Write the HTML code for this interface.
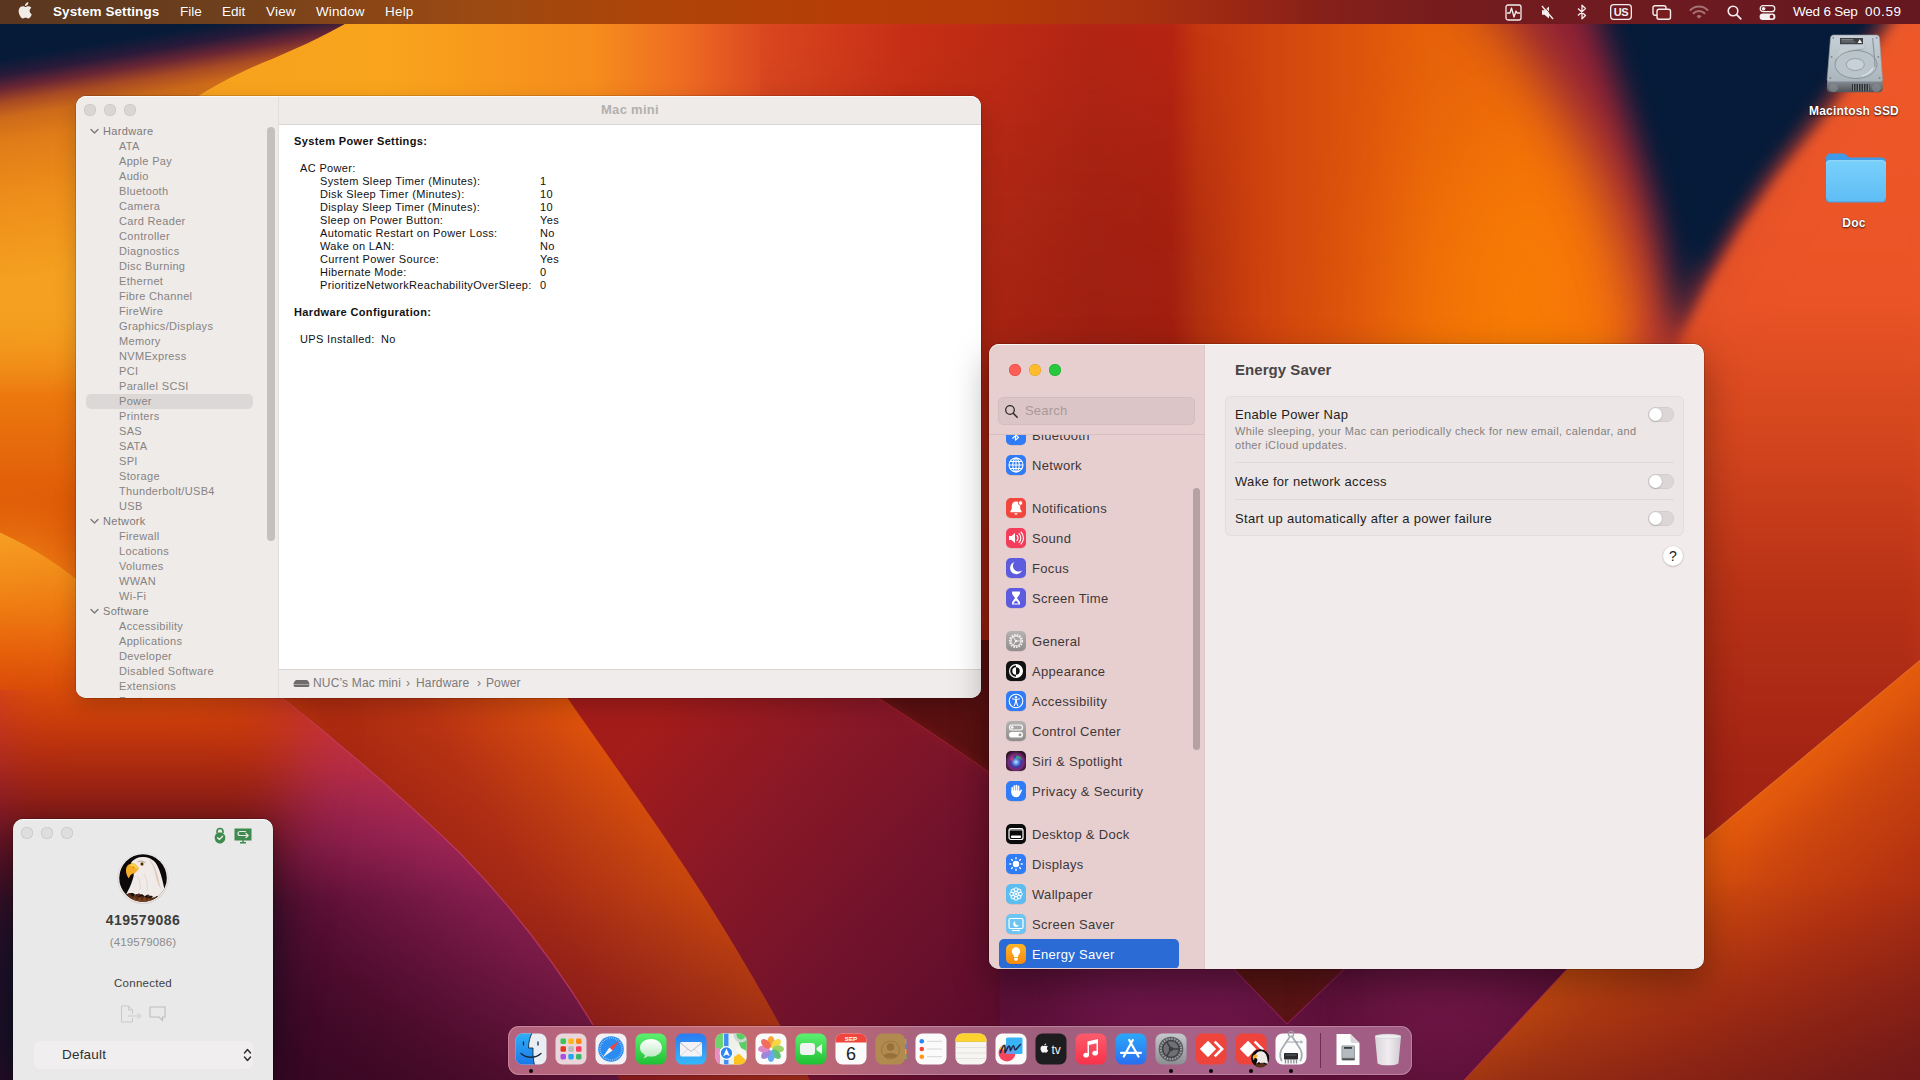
<!DOCTYPE html>
<html lang="en">
<head>
<meta charset="utf-8">
<title>Desktop</title>
<style>
*{box-sizing:border-box;margin:0;padding:0}
html,body{width:1920px;height:1080px;overflow:hidden;background:#b82814}
body{font-family:"Liberation Sans",sans-serif;position:relative;-webkit-font-smoothing:antialiased}
.abs{position:absolute}
#wall{position:absolute;left:0;top:0;width:1920px;height:1080px}
</style>
</head>
<body>
<svg id="wall" width="1920" height="1080" viewBox="0 0 1920 1080">
<defs>
<filter id="b4" filterUnits="userSpaceOnUse" x="-300" y="-300" width="2520" height="1680"><feGaussianBlur stdDeviation="4" color-interpolation-filters="sRGB"/></filter>
<filter id="b8" filterUnits="userSpaceOnUse" x="-300" y="-300" width="2520" height="1680"><feGaussianBlur stdDeviation="8" color-interpolation-filters="sRGB"/></filter>
<filter id="b15" filterUnits="userSpaceOnUse" x="-300" y="-300" width="2520" height="1680"><feGaussianBlur stdDeviation="15" color-interpolation-filters="sRGB"/></filter>
<filter id="b30" filterUnits="userSpaceOnUse" x="-300" y="-300" width="2520" height="1680"><feGaussianBlur stdDeviation="30" color-interpolation-filters="sRGB"/></filter>
<filter id="b60" filterUnits="userSpaceOnUse" x="-300" y="-300" width="2520" height="1680"><feGaussianBlur stdDeviation="60" color-interpolation-filters="sRGB"/></filter>
<filter id="b6" filterUnits="userSpaceOnUse" x="-300" y="-300" width="2520" height="1680"><feGaussianBlur stdDeviation="6" color-interpolation-filters="sRGB"/></filter>
<linearGradient id="gTL" x1="0" y1="24" x2="50" y2="320" gradientUnits="userSpaceOnUse">
<stop offset="0" stop-color="#051b39"/>
<stop offset="0.12" stop-color="#071b38"/>
<stop offset="0.17" stop-color="#2a1a3a"/>
<stop offset="0.215" stop-color="#6a2634"/>
<stop offset="0.26" stop-color="#a84a24"/>
<stop offset="0.31" stop-color="#cc6a1a"/>
<stop offset="0.39" stop-color="#e07c18"/>
<stop offset="0.58" stop-color="#ee8e1a"/>
<stop offset="0.85" stop-color="#f5a020"/>
</linearGradient>
<linearGradient id="gLS" x1="0" y1="300" x2="0" y2="620" gradientUnits="userSpaceOnUse">
<stop offset="0" stop-color="#f5a020" stop-opacity="0"/>
<stop offset="0.3" stop-color="#ec780e"/>
<stop offset="0.62" stop-color="#e05c08"/>
<stop offset="1" stop-color="#dc5606"/>
</linearGradient>
<linearGradient id="gtop" x1="0" y1="0" x2="1920" y2="0" gradientUnits="userSpaceOnUse">
<stop offset="0" stop-color="#f5a020"/>
<stop offset="0.20" stop-color="#f9a41c"/>
<stop offset="0.31" stop-color="#f68c1c"/>
<stop offset="0.355" stop-color="#ee6c22"/>
<stop offset="0.40" stop-color="#da4620"/>
<stop offset="0.47" stop-color="#c83016"/>
<stop offset="0.57" stop-color="#b22514"/>
<stop offset="0.610" stop-color="#b62412"/>
<stop offset="0.624" stop-color="#c43610"/>
<stop offset="0.66" stop-color="#d0440e"/>
<stop offset="0.705" stop-color="#dc540c"/>
<stop offset="0.745" stop-color="#e6620a"/>
<stop offset="0.79" stop-color="#ea660a"/>
<stop offset="0.86" stop-color="#ec5a20"/>
<stop offset="1" stop-color="#f05a28"/>
</linearGradient>
<linearGradient id="gdark" x1="0" y1="0" x2="0" y2="1080" gradientUnits="userSpaceOnUse">
<stop offset="0.05" stop-color="#000" stop-opacity="0"/>
<stop offset="0.35" stop-color="#500808" stop-opacity="0.22"/>
<stop offset="0.65" stop-color="#500808" stop-opacity="0.30"/>
</linearGradient>
<linearGradient id="gleft" x1="0" y1="0" x2="0" y2="1080" gradientUnits="userSpaceOnUse">
<stop offset="0.49" stop-color="#f8a428"/>
<stop offset="0.54" stop-color="#f28c18"/>
<stop offset="0.60" stop-color="#e8620a"/>
<stop offset="0.645" stop-color="#d84808"/>
<stop offset="0.665" stop-color="#cc3c0a"/>
<stop offset="0.71" stop-color="#ae2a10"/>
<stop offset="0.745" stop-color="#8a1a14"/>
<stop offset="0.80" stop-color="#4a1020"/>
<stop offset="0.86" stop-color="#101428"/>
<stop offset="1" stop-color="#081428"/>
</linearGradient>
<linearGradient id="gA" x1="520" y1="760" x2="250" y2="1000" gradientUnits="userSpaceOnUse">
<stop offset="0" stop-color="#b42a5c"/>
<stop offset="0.35" stop-color="#8c1f52"/>
<stop offset="0.75" stop-color="#5a0e34"/>
<stop offset="1" stop-color="#40082a"/>
</linearGradient>
<linearGradient id="gAtop" x1="0" y1="690" x2="0" y2="900" gradientUnits="userSpaceOnUse">
<stop offset="0" stop-color="#cc3230" stop-opacity="1"/>
<stop offset="0.35" stop-color="#c23040" stop-opacity="0.8"/>
<stop offset="0.7" stop-color="#b02a50" stop-opacity="0.35"/>
<stop offset="1" stop-color="#b02858" stop-opacity="0"/>
</linearGradient>
<linearGradient id="gAv" x1="0" y1="840" x2="0" y2="1080" gradientUnits="userSpaceOnUse">
<stop offset="0" stop-color="#30061c" stop-opacity="0"/>
<stop offset="1" stop-color="#30061c" stop-opacity="0.5"/>
</linearGradient>
<linearGradient id="gB" x1="690" y1="830" x2="470" y2="960" gradientUnits="userSpaceOnUse">
<stop offset="0" stop-color="#ec5c06"/>
<stop offset="0.3" stop-color="#d44a0e"/>
<stop offset="0.65" stop-color="#bc3412"/>
<stop offset="1" stop-color="#ac2a10"/>
</linearGradient>
<linearGradient id="gBv" x1="0" y1="700" x2="0" y2="1080" gradientUnits="userSpaceOnUse">
<stop offset="0" stop-color="#5a0820" stop-opacity="0"/>
<stop offset="0.5" stop-color="#5a0820" stop-opacity="0.22"/>
<stop offset="1" stop-color="#5a0820" stop-opacity="0.6"/>
</linearGradient>
<linearGradient id="gC" x1="650" y1="720" x2="1000" y2="1040" gradientUnits="userSpaceOnUse">
<stop offset="0" stop-color="#a41c1a"/>
<stop offset="0.3" stop-color="#8a1826"/>
<stop offset="0.65" stop-color="#70122c"/>
<stop offset="1" stop-color="#5a0c2c"/>
</linearGradient>
<linearGradient id="gR" x1="0" y1="0" x2="0" y2="1080" gradientUnits="userSpaceOnUse">
<stop offset="0" stop-color="#f05a2a"/>
<stop offset="0.28" stop-color="#ea5426"/>
<stop offset="0.40" stop-color="#d4461e"/>
<stop offset="0.55" stop-color="#b83216"/>
<stop offset="0.70" stop-color="#a42414"/>
<stop offset="1" stop-color="#8c1c18"/>
</linearGradient>
<linearGradient id="gR2" x1="1812" y1="750" x2="2017" y2="996" gradientUnits="userSpaceOnUse">
<stop offset="0" stop-color="#e65c0c"/>
<stop offset="0.06" stop-color="#e0560c"/>
<stop offset="0.2" stop-color="#cc460e"/>
<stop offset="0.45" stop-color="#b83410"/>
<stop offset="0.95" stop-color="#8c2016"/>
</linearGradient>
<linearGradient id="gR2v" x1="0" y1="880" x2="0" y2="1080" gradientUnits="userSpaceOnUse">
<stop offset="0" stop-color="#50101a" stop-opacity="0"/>
<stop offset="1" stop-color="#50101a" stop-opacity="0.42"/>
</linearGradient>
</defs>
<!-- base -->
<rect width="1920" height="1080" fill="url(#gtop)"/>
<rect width="560" height="1080" x="660" fill="url(#gdark)" filter="url(#b30)"/>
<!-- orange bulge glow -->
<ellipse cx="1530" cy="350" rx="110" ry="240" fill="#f97e04" opacity="0.9" filter="url(#b60)"/>
<!-- right orange-red region -->
<path d="M1640,330 L1905,-30 L1940,-30 L1940,1100 L1560,1100 Z" fill="url(#gR)" filter="url(#b15)"/>
<!-- navy petal top-right -->
<path d="M1460,-40 L1915,-40 L1780,160 L1705,300 L1668,420 C1660,330 1640,250 1600,165 C1565,95 1505,20 1460,-40 Z" fill="#861c38" filter="url(#b30)" opacity="0.95"/>
<path d="M1575,-40 L1927,-40 L1821,112 L1771,172 L1736,222 L1700,282 L1676,345 C1674,300 1666,245 1648,180 C1630,120 1605,40 1575,-40 Z" fill="#051b39" filter="url(#b15)"/>
<path d="M1615,-40 L1912,-40 L1812,100 L1762,165 L1728,215 L1698,270 C1690,235 1680,200 1668,160 C1650,100 1635,30 1615,-40 Z" fill="#051b39" filter="url(#b8)"/>
<path d="M1934,-30 L1950,-30 L1950,420 L1660,420 L1683,334 L1707,288 L1743,228 L1778,178 L1828,118 Z" fill="url(#gR)" filter="url(#b6)" opacity="0.9"/>
<!-- top-left navy gradient -->
<rect x="-10" y="-10" width="520" height="330" fill="url(#gTL)"/>
<!-- yellow petal top -->
<path d="M352,20 C322,37 292,51 262,63 C236,74 214,86 192,100 C150,128 120,160 90,200 L60,330 L760,330 L760,20 Z" fill="url(#gtop)"/>
<rect x="-10" y="300" width="320" height="330" fill="url(#gLS)"/>
<!-- left petal -->
<path d="M-10,528 C30,545 60,565 90,590 L300,700 L300,1090 L-10,1090 Z" fill="url(#gleft)"/>
<!-- bottom base -->
<path d="M260,690 L1010,690 L1010,960 L1700,960 L1700,1090 L260,1090 Z" fill="#64102e"/>
<!-- petal C -->
<path d="M540,690 L1010,690 L1010,1090 L780,1090 Z" fill="url(#gC)"/>
<path d="M866,640 L866,690 C910,718 955,748 1000,780 L1010,780 L1010,640 Z" fill="#5a1010"/>
<path d="M866,690 C910,718 955,748 1000,780" fill="none" stroke="#a8222e" stroke-width="2.5" opacity=".55" filter="url(#b4)"/>
<path d="M866,690 C910,718 955,748 1000,780" fill="none" stroke="#b02a30" stroke-width="1" opacity=".6"/>
<!-- petal B -->
<path d="M270,690 L562,690 C600,745 640,800 688,872 C730,936 770,1005 815,1090 L560,1090 Z" fill="url(#gB)"/>
<path d="M270,690 L562,690 C600,745 640,800 688,872 C730,936 770,1005 815,1090 L560,1090 Z" fill="url(#gBv)"/>
<!-- petal A -->
<path d="M-10,690 L272,690 C330,735 400,795 460,853 C515,910 560,970 593,1025 L625,1090 L-10,1090 Z" fill="url(#gA)"/>
<path d="M-10,690 L272,690 C330,735 400,795 460,853 C515,910 560,970 593,1025 L625,1090 L-10,1090 Z" fill="url(#gAtop)"/>
<path d="M-10,690 L272,690 C330,735 400,795 460,853 C515,910 560,970 593,1025 L625,1090 L-10,1090 Z" fill="url(#gAv)"/>
<path d="M272,690 C330,735 400,795 460,853 C515,910 560,970 593,1025" fill="none" stroke="#d04878" stroke-width="1.2" opacity="0.6"/>
<!-- left strip over petal A -->
<path d="M-10,528 C30,545 60,565 90,590 L300,700 L240,1090 L-10,1090 Z" fill="url(#gleft)" filter="url(#b30)"/>
<!-- bottom right -->
<path d="M1000,960 L1700,960 L1700,1090 L1000,1090 Z" fill="#5c1038"/>
<ellipse cx="1180" cy="1000" rx="120" ry="60" fill="#6c1648" filter="url(#b30)"/>
<path d="M1225,960 L1354,960 L1287,1024 Z" fill="#5a1414"/>
<path d="M1225,960 L1287,1024 L1354,960" fill="none" stroke="#9a2460" stroke-width="1.2" opacity="0.7"/>
<ellipse cx="1440" cy="1000" rx="90" ry="60" fill="#6c1644" filter="url(#b30)"/>
<!-- right lower petal -->
<path d="M1930,652 L1704,840 L1568,968 L1455,1090 L1930,1090 Z" fill="url(#gR2)"/>
<path d="M1930,652 L1704,840 L1568,968 L1455,1090 L1930,1090 Z" fill="url(#gR2v)"/>
<path d="M1930,652 L1704,840" fill="none" stroke="#f28a40" stroke-width="1.2" opacity=".45"/>
<path d="M1568,968 L1455,1090" fill="none" stroke="#c03058" stroke-width="1.2" opacity=".5"/>
</svg>
<style>
#mb{position:absolute;left:0;top:0;width:1920px;height:24px;background:linear-gradient(90deg,#59351f 0,#5e3a20 4%,#70401c 12%,#8a4616 19%,#9c4a12 25%,#ae4408 34%,#b63e06 44%,#b43a08 52%,#a83010 60%,#982614 65%,#86201a 69%,#741c1e 76%,#6c1a20 88%,#64181f 100%);color:#fff;font-size:13.5px;line-height:24px;white-space:nowrap}
#mb span{position:absolute;top:0;text-shadow:0 0 1px rgba(0,0,0,.25)}
#mb svg{position:absolute}
</style>
<div id="mb">
<svg style="left:14px;top:-1px" width="23" height="23" viewBox="0 0 18 18"><path fill="#f2ece8" d="M12.2 9.4c0-1.6 1.3-2.4 1.4-2.5-.8-1.100-1.900-1.300-2.300-1.300-1-.1-1.900.6-2.400.6s-1.300-.6-2.100-.5c-1.100 0-2.100.6-2.600 1.600-1.100 1.900-.3 4.800.8 6.300.5.800 1.200 1.600 2 1.600.8 0 1.100-.5 2.100-.5s1.200.5 2.100.5c.9 0 1.400-.8 1.900-1.500.6-.9.800-1.700.9-1.700 0 0-1.700-.7-1.800-2.600zM10.600 4.500c.4-.5.700-1.300.600-2-.6 0-1.400.4-1.900 1-.4.500-.8 1.200-.7 1.900.8.100 1.500-.4 2-.9z"/></svg>
<span style="left:53px;font-weight:bold;letter-spacing:.09px">System Settings</span>
<span style="left:180px">File</span>
<span style="left:222px">Edit</span>
<span style="left:266px;letter-spacing:.2px">View</span>
<span style="left:316px;letter-spacing:.1px">Window</span>
<span style="left:385px;letter-spacing:.2px">Help</span>
<!-- right icons -->
<svg style="left:1505px;top:4px" width="17" height="17" viewBox="0 0 17 17"><rect x="1" y="1" width="15" height="15" rx="2" fill="none" stroke="#f4eeee" stroke-width="1.3"/><path d="M2 9h3l1.500-5 2.500 9 2-6 1 2h3" fill="none" stroke="#f4eeee" stroke-width="1.3" stroke-linejoin="round"/></svg>
<svg style="left:1539px;top:4px" width="18" height="17" viewBox="0 0 18 17"><path d="M3 6.300h2.500L10 2.500v12L5.500 10.700H3z" fill="#f4eeee"/><path d="M3 2l11 13" stroke="#f4eeee" stroke-width="1.400"/><path d="M4.200 1.200l11 13" stroke="#7a2218" stroke-width="1"/></svg>
<svg style="left:1575px;top:3px" width="14" height="18" viewBox="0 0 14 18"><path d="M3 5.500l7.500 7L7 15.800V2.200l3.500 3.300L3 12.500" fill="none" stroke="#f4eeee" stroke-width="1.300" stroke-linejoin="round"/></svg>
<svg style="left:1610px;top:4px" width="22" height="16" viewBox="0 0 22 16"><rect x=".65" y=".65" width="20.700" height="14.700" rx="3" fill="none" stroke="#f4eeee" stroke-width="1.300"/><text x="11" y="12" text-anchor="middle" font-family="Liberation Sans,sans-serif" font-weight="bold" font-size="11" letter-spacing="-.3" fill="#f4eeee">US</text></svg>
<svg style="left:1652px;top:4px" width="20" height="17" viewBox="0 0 20 17"><rect x="1" y="1.700" width="13" height="9.600" rx="2" fill="none" stroke="#f4eeee" stroke-width="1.400"/><rect x="5" y="5.300" width="13.500" height="10" rx="2" fill="#7a1c1e" stroke="#f4eeee" stroke-width="1.400"/></svg>
<svg style="left:1689px;top:4px" width="20" height="16" viewBox="0 0 20 16" opacity=".42"><path d="M1.500 6a12 12 0 0 1 17 0" fill="none" stroke="#f4eeee" stroke-width="2" stroke-linecap="round"/><path d="M4.500 9.200a7.800 7.800 0 0 1 11 0" fill="none" stroke="#f4eeee" stroke-width="2" stroke-linecap="round"/><path d="M7.500 12.200a3.600 3.600 0 0 1 5 0L10 14.800z" fill="#f4eeee"/></svg>
<svg style="left:1726px;top:4px" width="17" height="17" viewBox="0 0 17 17"><circle cx="7" cy="7" r="4.800" fill="none" stroke="#f4eeee" stroke-width="1.600"/><path d="M10.600 10.600l4.200 4.200" stroke="#f4eeee" stroke-width="1.800" stroke-linecap="round"/></svg>
<svg style="left:1759px;top:4px" width="17" height="17" viewBox="0 0 17 17"><rect x="1.200" y="1.700" width="14.600" height="6" rx="3" fill="none" stroke="#f4eeee" stroke-width="1.300"/><circle cx="4.600" cy="4.700" r="1.800" fill="#f4eeee"/><rect x=".6" y="9.500" width="15.800" height="6.400" rx="3.200" fill="#f4eeee"/><circle cx="12.600" cy="12.700" r="1.900" fill="#6e1a20"/></svg>
<span style="left:1793px;letter-spacing:-.22px">Wed 6 Sep</span>
<span style="left:1865px;letter-spacing:.55px">00.59</span>
</div>
<style>
.dlab{position:absolute;width:140px;text-align:center;color:#fff;font-weight:bold;font-size:12px;text-shadow:0 1px 2px rgba(0,0,0,.7),0 0 1px rgba(0,0,0,.5);letter-spacing:.2px;white-space:nowrap}
</style>
<svg style="position:absolute;left:1824px;top:32px" width="62" height="62" viewBox="0 0 62 62">
<defs><linearGradient id="hd1" x1="0" y1="0" x2="0" y2="1"><stop offset="0" stop-color="#c6d0d6"/><stop offset="1" stop-color="#aab5bd"/></linearGradient>
<linearGradient id="hd2" x1="0" y1="0" x2="0" y2="1"><stop offset="0" stop-color="#8e959b"/><stop offset="1" stop-color="#50555a"/></linearGradient></defs>
<path d="M3.200 47.500h55.300l.3 9c0 2.200-1.500 3.700-3.700 3.700H6.600c-2.200 0-3.700-1.500-3.700-3.700z" fill="url(#hd2)"/>
<rect x="28" y="52" width="17.500" height="7" fill="#2a2c2f"/>
<path d="M29.500 52v7M32 52v7M34.500 52v7M37 52v7M39.500 52v7M42 52v7M44.500 52v7" stroke="#7e848a" stroke-width="1.100"/>
<ellipse cx="9.500" cy="56" rx="4.500" ry="4" fill="#868c92" opacity=".7"/><ellipse cx="52.500" cy="56" rx="4.500" ry="4" fill="#868c92" opacity=".7"/>
<path d="M6.500 6c.2-1.800 1.500-3 3.300-3h42.500c1.800 0 3 1.200 3.200 3l3 41c.1 1.600-.9 2.600-2.500 2.600H5.700c-1.600 0-2.600-1-2.500-2.600z" fill="url(#hd1)" stroke="#949ca3" stroke-width=".6"/>
<rect x="16" y="6" width="23" height="6.200" fill="#3c3f43"/><rect x="17.300" y="7.300" width="12" height="1.100" fill="#9a9ea2"/><rect x="17.300" y="9.500" width="14" height="1" fill="#7c8084"/><path d="M33.500 11l2.300-3.700 2.300 3.700z" fill="#f0f0f0"/>
<ellipse cx="32" cy="32.500" rx="21" ry="14" fill="#b9c4cb" stroke="#858d94" stroke-width=".9"/>
<path d="M11.500 29c3-7 11-10.500 22-11.500l6-.8c.8-.1 1.200-.6 1.200-1.400V13.500" fill="none" stroke="#858d94" stroke-width="1"/>
<path d="M11 30c3-7.500 11-11.500 22.500-12.500l7.500-1v-3.300H16.200v3.500z" fill="#c3cdd3" opacity=".9"/>
<ellipse cx="31.300" cy="32.500" rx="9" ry="6" fill="#c8d1d7" stroke="#8c949b" stroke-width=".8"/>
<path d="M48.700 6c.5 9 2.200 20 2.300 29" fill="none" stroke="#8a9299" stroke-width="1.100"/>
<path d="M38 44c5-1.500 9-4.500 11-8" fill="none" stroke="#e8eef2" stroke-width="1.200" opacity=".8"/>
<circle cx="9.300" cy="5.800" r=".9" fill="#7e868d"/><circle cx="52.700" cy="5.800" r=".9" fill="#7e868d"/><circle cx="6.300" cy="46" r=".9" fill="#7e868d"/><circle cx="55.700" cy="46" r=".9" fill="#7e868d"/><circle cx="54.300" cy="25" r=".9" fill="#7e868d"/><circle cx="7.600" cy="25" r=".9" fill="#7e868d"/>
</svg>
<div class="dlab" style="left:1784px;top:104px">Macintosh SSD</div>
<svg style="position:absolute;left:1824px;top:150px" width="64" height="56" viewBox="0 0 64 56">
<defs><linearGradient id="fd1" x1="0" y1="0" x2="0" y2="1"><stop offset="0" stop-color="#79d0fb"/><stop offset="1" stop-color="#5fbdf5"/></linearGradient></defs>
<path d="M2 8c0-2.500 1.500-4.500 4.500-4.500h12c2 0 3 .8 4.500 2.200 1.300 1.300 2.300 1.800 4.500 1.800h30c2.500 0 4.500 1.500 4.500 4.500v10H2z" fill="#3f9be8"/>
<path d="M2 14c0-2.200 1.300-3.500 3.500-3.500h53c2.200 0 3.500 1.300 3.500 3.500v34c0 2.500-1.500 4-4 4H6c-2.500 0-4-1.500-4-4z" fill="url(#fd1)"/>
<path d="M2.500 48.500c0 2 1.500 3.500 3.500 3.500h52c2 0 3.500-1.500 3.500-3.500" fill="none" stroke="#4a9fe0" stroke-width="1.200"/>
<path d="M2.500 13.500c0-1.800 1.200-2.800 3-2.800h53c1.800 0 3 1 3 2.800" fill="none" stroke="#a8e2ff" stroke-width=".8"/>
</svg>
<div class="dlab" style="left:1784px;top:216px">Doc</div>
<style>
#si{position:absolute;left:76px;top:96px;width:905px;height:602px;border-radius:10px;overflow:hidden;background:#fff;box-shadow:0 0 0 .5px rgba(0,0,0,.28),0 8px 22px rgba(0,0,0,.2);font-size:11px;white-space:nowrap}
#si .sb{position:absolute;left:0;top:0;width:203px;height:602px;background:#efebe9;border-right:1px solid #e2dedc}
#si .tb{position:absolute;left:203px;top:0;width:702px;height:29px;background:#efebe9;border-bottom:1px solid #d9d5d3}
#si .tb b{position:absolute;left:0;width:100%;top:6px;text-align:center;font-size:13px;color:#b3b0ae;letter-spacing:.3px}
#si .tl{position:absolute;top:8px;width:12px;height:12px;border-radius:50%;background:#dad6d5;box-shadow:inset 0 0 0 .5px #c4c0be}
#si .sb p{position:absolute;left:43px;color:#868382;height:15px;line-height:15px;letter-spacing:.33px}
#si .sb p.g{left:27px;color:#7c7978}
#si .sb svg{position:absolute;left:14px}
#si .sel{position:absolute;left:10px;top:298px;width:167px;height:15px;border-radius:5px;background:#dcd8d7}
#si .scr{position:absolute;left:191px;top:31px;width:8px;height:414px;border-radius:4px;background:#c3c0bf}
#si .ct div{position:absolute;color:#111;line-height:13px;height:13px;letter-spacing:.35px}
#si .ct b{letter-spacing:.36px}
#si .ft{position:absolute;left:203px;top:573px;width:702px;height:29px;background:#f0eceb;border-top:1px solid #dad6d4;color:#7c7978;font-size:12px;line-height:26px}
#si .ft span{position:absolute;top:0}
#si:after{content:"";position:absolute;left:0;top:0;right:0;bottom:0;border-radius:10px;box-shadow:inset 0 1px 0 rgba(255,255,255,.85);pointer-events:none}
</style>
<div id="si">
<div class="sb">
<i class="tl" style="left:8px"></i><i class="tl" style="left:28px"></i><i class="tl" style="left:48px"></i>
<i class="sel"></i>
<svg style="top:32px" width="9" height="7" viewBox="0 0 9 7"><path d="M1 1.500l3.500 3.500L8 1.500" fill="none" stroke="#7c7978" stroke-width="1.400" stroke-linecap="round" stroke-linejoin="round"/></svg>
<p class="g" style="top:28px">Hardware</p>
<p style="top:43px">ATA</p>
<p style="top:58px">Apple Pay</p>
<p style="top:73px">Audio</p>
<p style="top:88px">Bluetooth</p>
<p style="top:103px">Camera</p>
<p style="top:118px">Card Reader</p>
<p style="top:133px">Controller</p>
<p style="top:148px">Diagnostics</p>
<p style="top:163px">Disc Burning</p>
<p style="top:178px">Ethernet</p>
<p style="top:193px">Fibre Channel</p>
<p style="top:208px">FireWire</p>
<p style="top:223px">Graphics/Displays</p>
<p style="top:238px">Memory</p>
<p style="top:253px">NVMExpress</p>
<p style="top:268px">PCI</p>
<p style="top:283px">Parallel SCSI</p>
<p style="top:298px">Power</p>
<p style="top:313px">Printers</p>
<p style="top:328px">SAS</p>
<p style="top:343px">SATA</p>
<p style="top:358px">SPI</p>
<p style="top:373px">Storage</p>
<p style="top:388px">Thunderbolt/USB4</p>
<p style="top:403px">USB</p>
<svg style="top:422px" width="9" height="7" viewBox="0 0 9 7"><path d="M1 1.500l3.500 3.500L8 1.500" fill="none" stroke="#7c7978" stroke-width="1.400" stroke-linecap="round" stroke-linejoin="round"/></svg>
<p class="g" style="top:418px">Network</p>
<p style="top:433px">Firewall</p>
<p style="top:448px">Locations</p>
<p style="top:463px">Volumes</p>
<p style="top:478px">WWAN</p>
<p style="top:493px">Wi-Fi</p>
<svg style="top:512px" width="9" height="7" viewBox="0 0 9 7"><path d="M1 1.500l3.500 3.500L8 1.500" fill="none" stroke="#7c7978" stroke-width="1.400" stroke-linecap="round" stroke-linejoin="round"/></svg>
<p class="g" style="top:508px">Software</p>
<p style="top:523px">Accessibility</p>
<p style="top:538px">Applications</p>
<p style="top:553px">Developer</p>
<p style="top:568px">Disabled Software</p>
<p style="top:583px">Extensions</p>
<p style="top:598px">Fonts</p>
<i class="scr"></i>
</div>
<div class="tb"><b>Mac mini</b></div>
<div class="ct">
<div style="left:218px;top:39px"><b>System Power Settings:</b></div>
<div style="left:224px;top:66px">AC Power:</div>
<div style="left:244px;top:79px">System Sleep Timer (Minutes):</div><div style="left:464px;top:79px">1</div>
<div style="left:244px;top:92px">Disk Sleep Timer (Minutes):</div><div style="left:464px;top:92px">10</div>
<div style="left:244px;top:105px">Display Sleep Timer (Minutes):</div><div style="left:464px;top:105px">10</div>
<div style="left:244px;top:118px">Sleep on Power Button:</div><div style="left:464px;top:118px">Yes</div>
<div style="left:244px;top:131px">Automatic Restart on Power Loss:</div><div style="left:464px;top:131px">No</div>
<div style="left:244px;top:144px">Wake on LAN:</div><div style="left:464px;top:144px">No</div>
<div style="left:244px;top:157px">Current Power Source:</div><div style="left:464px;top:157px">Yes</div>
<div style="left:244px;top:170px">Hibernate Mode:</div><div style="left:464px;top:170px">0</div>
<div style="left:244px;top:183px">PrioritizeNetworkReachabilityOverSleep:</div><div style="left:464px;top:183px">0</div>
<div style="left:218px;top:210px"><b>Hardware Configuration:</b></div>
<div style="left:224px;top:237px">UPS Installed:</div><div style="left:305px;top:237px">No</div>
</div>
<div class="ft">
<svg style="position:absolute;left:14px;top:9px" width="17" height="9" viewBox="0 0 17 9"><path d="M3.500 1h10c1.200 0 2.500 2 2.800 3.500v2.300c0 .7-.5 1.200-1.200 1.200H1.900C1.200 8 .7 7.500.7 6.800V4.500C1 3 2.300 1 3.500 1z" fill="#6e6b6a"/><rect x=".7" y="5" width="15.600" height=".8" fill="#b5b2b0"/></svg>
<span style="left:34px;letter-spacing:.16px">NUC’s Mac mini</span>
<span style="left:127px">›</span>
<span style="left:137px;letter-spacing:.16px">Hardware</span>
<span style="left:198px">›</span>
<span style="left:207px;letter-spacing:.12px">Power</span>
</div>
</div>
<style>
#ss{position:absolute;left:989px;top:344px;width:715px;height:625px;border-radius:10px;overflow:hidden;background:#f1eceb;box-shadow:0 0 0 .5px rgba(0,0,0,.3),0 14px 36px rgba(0,0,0,.35);white-space:nowrap}
#ss .sb{position:absolute;left:0;top:0;width:216px;height:625px;background:#e7cfd0;border-right:1px solid #dcc6c6}
#ss .tl{position:absolute;top:20px;width:12px;height:12px;border-radius:50%}
#ss .srch{position:absolute;left:9px;top:53px;width:197px;height:28px;border-radius:6px;background:#dcc5c6;box-shadow:inset 0 0 0 .5px rgba(0,0,0,.08)}
#ss .srch span{position:absolute;left:27px;top:6px;font-size:13px;color:#a89a9b;letter-spacing:.2px}
#ss .ln{position:absolute;left:0;top:90px;width:216px;height:1px;background:#d6bfc0}
#ss .list{position:absolute;left:0;top:91px;width:216px;height:533px;overflow:hidden}
#ss .it{position:absolute;left:17px;height:20px;font-size:13px;line-height:20px;color:#3d3738;letter-spacing:.32px}
#ss .it i{position:absolute;left:0;top:0;width:20px;height:20px;border-radius:5px;box-shadow:0 .5px .5px rgba(0,0,0,.15)}
#ss .it i svg{position:absolute;left:0;top:0}
#ss .it span{position:absolute;left:26px;top:1px}
#ss .selbg{position:absolute;left:10px;top:504px;width:180px;height:30px;border-radius:5px;background:#2b6bd6}
#ss .scr{position:absolute;left:204px;top:144px;width:7px;height:262px;border-radius:4px;background:#b6a2a3}
#ss h1{position:absolute;left:246px;top:17px;font-size:15px;font-weight:bold;color:#4a4545;letter-spacing:.05px}
#ss .box{position:absolute;left:236px;top:52px;width:459px;height:140px;border-radius:6px;background:#ece7e6;box-shadow:inset 0 0 0 1px #e3dddc}
#ss .box p{position:absolute;left:10px;font-size:13px;color:#1f1d1d;letter-spacing:.31px}
#ss .box small{position:absolute;left:10px;font-size:11px;color:#858080;letter-spacing:.36px;line-height:14px}
#ss .box hr{position:absolute;left:10px;width:439px;height:1px;border:0;background:#e0dad9}
#ss .tg{position:absolute;left:423px;width:26px;height:15px;border-radius:8px;background:#dcd7d6;box-shadow:inset 0 0 0 .5px rgba(0,0,0,.08)}
#ss .tg:after{content:"";position:absolute;left:1px;top:1px;width:13px;height:13px;border-radius:50%;background:#fff;box-shadow:0 .5px 1.5px rgba(0,0,0,.3)}
#ss .help{position:absolute;left:674px;top:202px;width:20px;height:20px;border-radius:50%;background:#fff;box-shadow:0 .5px 2px rgba(0,0,0,.3);text-align:center;font-size:14px;line-height:20px;color:#222}
#ss:after{content:"";position:absolute;left:0;top:0;right:0;bottom:0;border-radius:10px;box-shadow:inset 0 1px 0 rgba(255,255,255,.8);pointer-events:none}
</style>
<div id="ss">
<div class="sb">
<i class="tl" style="left:20px;background:#fd5f57;box-shadow:inset 0 0 0 .5px #e0443e"></i>
<i class="tl" style="left:40px;background:#febb2e;box-shadow:inset 0 0 0 .5px #dea123"></i>
<i class="tl" style="left:60px;background:#27c83f;box-shadow:inset 0 0 0 .5px #1aab29"></i>
<div class="srch"><svg style="position:absolute;left:6px;top:7px" width="15" height="15" viewBox="0 0 15 15"><circle cx="6" cy="6" r="4.300" fill="none" stroke="#2e2a2a" stroke-width="1.300"/><path d="M9.200 9.200l4 4" stroke="#2e2a2a" stroke-width="1.500" stroke-linecap="round"/></svg><span>Search</span></div>
<div class="ln"></div>
<div class="list">
<i class="selbg"></i>
<div class="it" style="top:-10px"><i style="background:#2f7cf6"><svg width="20" height="20" viewBox="0 0 20 20"><path d="M6.500 6.500l6 6-3 2.500V5l3 2.500-6 6" fill="none" stroke="#fff" stroke-width="1.200" stroke-linejoin="round"/></svg></i><span>Bluetooth</span></div>
<div class="it" style="top:20px"><i style="background:#2f7cf6"><svg width="20" height="20" viewBox="0 0 20 20"><g fill="none" stroke="#fff" stroke-width="1.100"><circle cx="10" cy="10" r="7"/><ellipse cx="10" cy="10" rx="3.200" ry="7"/><path d="M3 10h14M4 6.500h12M4 13.500h12M10 3v14"/></g></svg></i><span>Network</span></div>
<div class="it" style="top:63px"><i style="background:#f2453d"><svg width="20" height="20" viewBox="0 0 20 20"><path d="M10 3.500c-2.600 0-4.200 2-4.200 4.500v2.800L4.300 13.500v.8h11.400v-.8l-1.500-2.700V8c0-2.500-1.600-4.500-4.200-4.500zM8.500 15.300a1.500 1.500 0 0 0 3 0z" fill="#fff"/><circle cx="14.500" cy="5" r="2.200" fill="#fff" stroke="#f2453d" stroke-width=".8"/></svg></i><span>Notifications</span></div>
<div class="it" style="top:93px"><i style="background:#f53c5a"><svg width="20" height="20" viewBox="0 0 20 20"><path d="M3 8h2.500L9 5v10l-3.500-3H3z" fill="#fff"/><path d="M11 7.500a3.500 3.500 0 0 1 0 5M13 5.700a6 6 0 0 1 0 8.600M15 4a8.500 8.500 0 0 1 0 12" fill="none" stroke="#fff" stroke-width="1.100" stroke-linecap="round"/></svg></i><span>Sound</span></div>
<div class="it" style="top:123px"><i style="background:#5d5be0"><svg width="20" height="20" viewBox="0 0 20 20"><path d="M8.500 4a6.200 6.200 0 1 0 7.600 8.200A5.600 5.600 0 0 1 8.500 4z" fill="#fff"/></svg></i><span>Focus</span></div>
<div class="it" style="top:153px"><i style="background:#5d5be0"><svg width="20" height="20" viewBox="0 0 20 20"><path d="M6 3.500h8v1.200c0 2.300-2 3.600-3 5.300 1 1.700 3 3 3 5.300v1.200H6v-1.200c0-2.300 2-3.600 3-5.300-1-1.700-3-3-3-5.300z" fill="#fff"/><path d="M7.500 15.500c.5-1.500 1.800-2 2.500-3 .7 1 2 1.500 2.500 3z" fill="#5d5be0"/></svg></i><span>Screen Time</span></div>
<div class="it" style="top:196px"><i style="background:linear-gradient(#b5b2b1,#8f8c8b)"><svg width="20" height="20" viewBox="0 0 20 20"><circle cx="10" cy="10" r="6.200" fill="none" stroke="#f4f2f2" stroke-width="1.800" stroke-dasharray="1.600 1.050"/><circle cx="10" cy="10" r="5" fill="none" stroke="#f4f2f2" stroke-width="1"/><path d="M10 10l-2.600-4M10 10h4.800M10 10l-2.600 4" stroke="#f4f2f2" stroke-width=".9"/><circle cx="10" cy="10" r="1.200" fill="#f4f2f2"/></svg></i><span>General</span></div>
<div class="it" style="top:226px"><i style="background:#111"><svg width="20" height="20" viewBox="0 0 20 20"><circle cx="10" cy="10" r="6.400" fill="#111" stroke="#fff" stroke-width="1.200"/><path d="M10 3.600a6.400 6.400 0 0 1 0 12.800z" fill="#fff"/><path d="M10 6.300a3.700 3.700 0 0 0 0 7.400z" fill="#fff"/><path d="M10 6.300a3.700 3.700 0 0 1 0 7.400z" fill="#111"/></svg></i><span>Appearance</span></div>
<div class="it" style="top:256px"><i style="background:#2f7cf6"><svg width="20" height="20" viewBox="0 0 20 20"><circle cx="10" cy="10" r="6.800" fill="none" stroke="#fff" stroke-width="1.100"/><circle cx="10" cy="6.300" r="1.200" fill="#fff"/><path d="M6 8.200l3 .6v2.200l-1.300 4h1.100l1.200-3.400 1.200 3.400h1.100L11 11V8.800l3-.6V7.300l-4 .6-4-.6z" fill="#fff"/></svg></i><span>Accessibility</span></div>
<div class="it" style="top:286px"><i style="background:linear-gradient(#b5b2b1,#8f8c8b)"><svg width="20" height="20" viewBox="0 0 20 20"><rect x="3.500" y="4" width="13" height="5" rx="2.500" fill="none" stroke="#fff" stroke-width="1.100"/><circle cx="6.200" cy="6.500" r="1.300" fill="#fff"/><rect x="3" y="11" width="14" height="5.600" rx="2.800" fill="#fff"/><circle cx="14" cy="13.800" r="1.500" fill="#9a9796"/></svg></i><span>Control Center</span></div>
<div class="it" style="top:316px"><i style="background:radial-gradient(circle at 50% 55%,#d8e4ff 0,#6aa0f0 14%,#3a3aa8 34%,#7a2a78 52%,#301428 74%,#1c1018 100%)"><svg width="20" height="20" viewBox="0 0 20 20"><path d="M10.500 4.500c3 0 5.200 2 5.500 5-2-2-4.500-2.600-6.500-1.500z" fill="#3fb86a" opacity=".75"/><path d="M4 9c.3-2.500 2-4.300 4.500-4.500C7 6 6.500 8 7 10.500z" fill="#e0406a" opacity=".7"/></svg></i><span>Siri &amp; Spotlight</span></div>
<div class="it" style="top:346px"><i style="background:#2f7cf6"><svg width="20" height="20" viewBox="0 0 20 20"><g fill="#fff"><rect x="5.400" y="6" width="1.700" height="6" rx=".85"/><rect x="7.500" y="4.300" width="1.700" height="7" rx=".85"/><rect x="9.600" y="3.700" width="1.700" height="7.500" rx=".85"/><rect x="11.700" y="4.600" width="1.700" height="7" rx=".85"/><path d="M5.400 9.500h8v1.200l1.300-1.900c.6-.8 1.700-.2 1.300.7l-2 4.200c-.7 1.600-1.700 2.500-3.600 2.500-2.800 0-5-1.600-5-4.200z"/></g></svg></i><span>Privacy &amp; Security</span></div>
<div class="it" style="top:389px"><i style="background:#0b0b0b"><svg width="20" height="20" viewBox="0 0 20 20"><rect x="3" y="4.500" width="14" height="11" rx="2" fill="none" stroke="#fff" stroke-width="1.200"/><rect x="3" y="4.500" width="14" height="2.200" fill="#fff" opacity=".55"/><rect x="5" y="11.500" width="10" height="2.600" rx=".8" fill="#fff"/></svg></i><span>Desktop &amp; Dock</span></div>
<div class="it" style="top:419px"><i style="background:#2f7cf6"><svg width="20" height="20" viewBox="0 0 20 20"><circle cx="10" cy="10" r="3.200" fill="#fff"/><g stroke="#fff" stroke-width="1.400" stroke-linecap="round"><path d="M10 3.800v.9M10 15.300v.9M3.800 10h.9M15.300 10h.9M5.600 5.600l.7.700M13.700 13.700l.7.700M5.600 14.400l.7-.7M13.700 6.300l.7-.7"/></g></svg></i><span>Displays</span></div>
<div class="it" style="top:449px"><i style="background:#5cbdf0"><svg width="20" height="20" viewBox="0 0 20 20"><g fill="none" stroke="#fff" stroke-width="1"><circle cx="10" cy="5.800" r="2"/><circle cx="10" cy="14.200" r="2"/><circle cx="5.800" cy="10" r="2"/><circle cx="14.200" cy="10" r="2"/><circle cx="7" cy="7" r="2"/><circle cx="13" cy="7" r="2"/><circle cx="7" cy="13" r="2"/><circle cx="13" cy="13" r="2"/></g><circle cx="10" cy="10" r="1.300" fill="#fff"/></svg></i><span>Wallpaper</span></div>
<div class="it" style="top:479px"><i style="background:#6cc4f2"><svg width="20" height="20" viewBox="0 0 20 20"><rect x="3" y="4.500" width="14" height="10" rx="1.500" fill="none" stroke="#fff" stroke-width="1.200"/><path d="M9.500 7a3 3 0 1 0 3.500 4 2.800 2.800 0 0 1-3.500-4z" fill="#fff"/><path d="M6 16.500h8" stroke="#fff" stroke-width="1.200"/></svg></i><span>Screen Saver</span></div>
<div class="it" style="top:509px;color:#fff"><i style="background:linear-gradient(#ffb52a,#f78a0c)"><svg width="20" height="20" viewBox="0 0 20 20"><path d="M10 3.200c-2.500 0-4.200 1.900-4.200 4.100 0 1.600.9 2.600 1.600 3.600.5.700.6 1.300.7 2.300h3.800c.1-1 .2-1.600.7-2.300.7-1 1.600-2 1.600-3.600 0-2.200-1.700-4.100-4.200-4.100zM8.200 14h3.600v1.200c0 .8-.7 1.500-1.800 1.500s-1.800-.7-1.800-1.500z" fill="#fff"/></svg></i><span>Energy Saver</span></div>
</div>
<i class="scr"></i>
</div>
<h1>Energy Saver</h1>
<div class="box">
<p style="top:11px">Enable Power Nap</p>
<small style="top:28px">While sleeping, your Mac can periodically check for new email, calendar, and<br>other iCloud updates.</small>
<i class="tg" style="top:11px"></i>
<hr style="top:66px">
<p style="top:78px">Wake for network access</p>
<i class="tg" style="top:78px"></i>
<hr style="top:103px">
<p style="top:115px">Start up automatically after a power failure</p>
<i class="tg" style="top:115px"></i>
</div>
<div class="help">?</div>
</div>
<style>
#ad{position:absolute;left:13px;top:819px;width:260px;height:271px;border-radius:10px;background:#e9e9e9;box-shadow:0 0 0 .5px rgba(0,0,0,.35),0 8px 24px rgba(0,0,0,.35);white-space:nowrap;color:#3a3a3a}
#ad .tl{position:absolute;top:8px;width:12px;height:12px;border-radius:50%;background:#dedede;box-shadow:inset 0 0 0 .6px #c2c2c2}
#ad .c{position:absolute;left:0;width:260px;text-align:center}
#ad .dd{position:absolute;left:21px;top:222px;width:219px;height:28px;border-radius:6px;background:#f0eeee}
#ad:after{content:"";position:absolute;left:0;top:0;right:0;bottom:0;border-radius:10px;box-shadow:inset 0 1px 0 rgba(255,255,255,.8);pointer-events:none}
</style>
<div id="ad">
<i class="tl" style="left:8px"></i><i class="tl" style="left:28px"></i><i class="tl" style="left:48px"></i>
<svg style="position:absolute;left:201px;top:8px" width="12" height="17" viewBox="0 0 12 17"><path d="M3 6V4.500a3 3 0 0 1 6 0V6" fill="none" stroke="#3f8a4e" stroke-width="1.600"/><path d="M6 5.500c3 0 5.300 2 5.300 5.200S9 16.500 6 16.500.7 14 .7 10.700 3 5.500 6 5.500z" fill="#3f8a4e"/><path d="M3.600 10.800l1.800 1.800 3.200-3.400" fill="none" stroke="#e9e9e9" stroke-width="1.400" stroke-linecap="round" stroke-linejoin="round"/></svg>
<svg style="position:absolute;left:221px;top:9px" width="18" height="16" viewBox="0 0 18 16"><rect x=".5" y=".5" width="17" height="12" fill="#3f8a4e"/><path d="M6 14.800h6M9 12v3" stroke="#3f8a4e" stroke-width="1.400"/><path d="M11.500 3.500H6a2 2 0 0 0 0 4h8M11.800 5.300L14.200 7.500l-2.400 2.200" fill="none" stroke="#e9e9e9" stroke-width="1.200" stroke-linecap="round" stroke-linejoin="round"/></svg>
<svg style="position:absolute;left:104px;top:33px" width="52" height="52" viewBox="0 0 52 52"><defs><clipPath id="avc"><circle cx="26" cy="26" r="23.800"/></clipPath></defs><circle cx="26" cy="26.500" r="25.600" fill="#d6cccb" opacity=".75"/><circle cx="26" cy="26" r="24.700" fill="#f4f2f2"/><g clip-path="url(#avc)"><rect width="52" height="52" fill="#0d0809"/><path d="M14 10.500C17 6.500 22 4.500 27 5c6 .5 11 3.500 13.500 9 2.500 5 4.500 12 6 19 1 5 2 9 3.500 12l-4 2-6-3-4 2.500-5-4-4 2.500-5-3.500-5 2.500-4-3-4 1.500c2.500-4.500 5-9.500 6.500-14.500 1-3 1.500-4.500 1-6l4.500-5z" fill="#f0ebe9"/><path d="M31 6.500c5 3.500 8 10.500 10 18.500 1 5 2 9 3.500 13-3.500-5-5-10-6-15-1-6-3.500-12-7.500-16.500z" fill="#d8bfa8" opacity=".75"/><path d="M20 24c3 4 4 9 3 14M27 22c3 5 4 11 3 17" stroke="#e2d6d0" stroke-width="1" fill="none"/><path d="M14.200 11.500c2.800-1 5.800 1 7.800 5l-2.500 3c-1.500 1.500-3 2-4.500 2.500-1.500.8-2.500 2.500-3.200 4.500-1.800-2.500-3.300-6-2.800-9.500.5-3 2.500-5 5.200-5.500z" fill="#f4ae28"/><path d="M14.200 11.500c2.800-1 5.800 1 7.800 5l-3 .5c-1.500-2-3.500-3-6-3z" fill="#f8cc50"/><circle cx="16.500" cy="15.500" r=".7" fill="#c07a18"/><circle cx="25" cy="12" r="1.900" fill="#b08a50"/><circle cx="25" cy="12" r="1" fill="#140a06"/><path d="M20.500 9.800c2.500-1.200 5.500-1 8 .8" stroke="#a89888" stroke-width=".9" fill="none"/><path d="M5 44.500l4-2 4-1.500 4 3 5-2.500 5 3.500 4-2.500 5 4 4-2.500 6 3v9H5z" fill="#5a2e16"/><path d="M13 45l2.500 4 2-4.500 2.500 5 2.500-5.500 2.500 5.500 2.500-5 2.500 5 2-4 2.500 4 2-3 2 4v4H12z" fill="#7a4420"/><path d="M13 41l2 3.500 2-.5 2.500-2 2 3.500 3-1.500 2.500 1 2.500-2 2.500 3.500 2.500-1.500 3.500 1-4-2.500-4 2.500-5-4-4 2.500-5-3.500z" fill="#1a0d08"/></g></svg>
<div class="c" style="top:93px;font-size:14px;font-weight:bold;letter-spacing:.5px;color:#3d3d3d">419579086</div>
<div class="c" style="top:117px;font-size:11.500px;color:#8c8c8c;letter-spacing:.1px">(419579086)</div>
<div class="c" style="top:158px;font-size:11.500px;color:#3f3f3f;letter-spacing:.25px">Connected</div>
<svg style="position:absolute;left:107px;top:186px" width="22" height="18" viewBox="0 0 22 18"><path d="M1.500 1h7l4 4v4M12.500 13v4h-11V1" fill="none" stroke="#c9c9c9" stroke-width="1"/><path d="M8.500 1v4h4" fill="none" stroke="#c9c9c9" stroke-width="1"/><path d="M8 11h12.500M17.500 8l3 3-3 3" fill="none" stroke="#c9c9c9" stroke-width="1"/></svg>
<svg style="position:absolute;left:136px;top:187px" width="17" height="16" viewBox="0 0 17 16"><path d="M1 1h15v10h-2.500v3.500L10 11H1z" fill="none" stroke="#bdbdbd" stroke-width="1.100"/></svg>
<div class="dd"><span style="position:absolute;left:28px;top:6px;font-size:13.500px;color:#2f2f2f;letter-spacing:.2px">Default</span>
<svg style="position:absolute;left:209px;top:6px" width="9" height="16" viewBox="0 0 9 16"><path d="M1.500 6l3-3.500 3 3.500M1.500 10l3 3.500 3-3.500" fill="none" stroke="#333" stroke-width="1.500" stroke-linecap="round" stroke-linejoin="round"/></svg></div>
</div>
<style>
#dk{position:absolute;left:508px;top:1026px;width:904px;height:49px;border-radius:11px;background:linear-gradient(90deg,#b3637f 0,#b86679 12%,#c46a72 26%,#bd6776 34%,#a8637e 46%,#9f5f7c 60%,#a8628a 78%,#a05c82 100%);box-shadow:inset 0 0 0 1px rgba(235,190,205,.38),0 0 0 .5px rgba(40,0,20,.35)}
#dk svg.i{position:absolute;top:7px;width:32px;height:32px;overflow:visible}
#dk b{position:absolute;top:43px;width:4px;height:4px;border-radius:50%;background:#0a0406}
</style>
<div id="dk">
<!-- Finder -->
<svg class="i" style="left:7px" viewBox="0 0 32 32"><defs><clipPath id="fcl"><rect x=".5" y=".5" width="31" height="31" rx="7"/></clipPath><linearGradient id="fg1" x1="0" y1="0" x2="0" y2="1"><stop offset="0" stop-color="#2fb0f8"/><stop offset="1" stop-color="#1a78e8"/></linearGradient></defs><g clip-path="url(#fcl)"><rect width="32" height="32" fill="#e9eef4"/><path d="M0 0h17c-2 4-3.500 9-3.500 15h4.500c-.3 6 .2 12 1.500 17H0z" fill="url(#fg1)"/><path d="M8.500 9v3M23 9v3" stroke="#1b2a3a" stroke-width="1.300" stroke-linecap="round"/><path d="M6 20.500c5.500 5 14.500 5 20 0" fill="none" stroke="#1b2a3a" stroke-width="1.300" stroke-linecap="round"/><path d="M17 0c-2 4-3.500 9-3.500 15h4.500c-.3 6 .2 12 1.500 17" fill="none" stroke="#1b2a3a" stroke-width=".9"/></g></svg>
<!-- Launchpad -->
<svg class="i" style="left:47px" viewBox="0 0 32 32"><rect x=".5" y=".5" width="31" height="31" rx="7" fill="#e8d6da"/><g><rect x="5.500" y="5.500" width="5.500" height="5.500" rx="1.400" fill="#35c759"/><rect x="13.300" y="5.500" width="5.500" height="5.500" rx="1.400" fill="#fdb814"/><rect x="21" y="5.500" width="5.500" height="5.500" rx="1.400" fill="#fd8a0e"/><rect x="5.500" y="13.300" width="5.500" height="5.500" rx="1.400" fill="#e03a1e"/><rect x="13.300" y="13.300" width="5.500" height="5.500" rx="1.400" fill="#b9b9b9"/><rect x="21" y="13.300" width="5.500" height="5.500" rx="1.400" fill="#fb3c5c"/><rect x="5.500" y="21" width="5.500" height="5.500" rx="1.400" fill="#ab4fe0"/><rect x="13.300" y="21" width="5.500" height="5.500" rx="1.400" fill="#28a4f4"/><rect x="21" y="21" width="5.500" height="5.500" rx="1.400" fill="#38b866"/></g></svg>
<!-- Safari -->
<svg class="i" style="left:87px" viewBox="0 0 32 32"><rect x=".5" y=".5" width="31" height="31" rx="7" fill="#f2f2f4"/><circle cx="16" cy="16" r="12.800" fill="#2a8bf0"/><circle cx="16" cy="16" r="11" fill="none" stroke="#e8f2ff" stroke-width="1.600" stroke-dasharray=".5 1.420" opacity=".9"/><path d="M24.500 7.500L14.400 14.400l3.200 3.200z" fill="#f2453d"/><path d="M7.500 24.500l10.100-6.900-3.200-3.200z" fill="#f4f4f4"/></svg>
<!-- Messages -->
<svg class="i" style="left:127px" viewBox="0 0 32 32"><defs><linearGradient id="mg1" x1="0" y1="0" x2="0" y2="1"><stop offset="0" stop-color="#5df070"/><stop offset="1" stop-color="#20c034"/></linearGradient><linearGradient id="mg2" x1="0" y1="0" x2="0" y2="1"><stop offset="0" stop-color="#fff"/><stop offset="1" stop-color="#b9e8c0"/></linearGradient></defs><rect x=".5" y=".5" width="31" height="31" rx="7" fill="url(#mg1)"/><path d="M16 6c6.300 0 11 3.800 11 8.800s-4.700 8.800-11 8.800c-1.200 0-2.300-.1-3.400-.4-1 1-2.500 1.800-4.200 2 .9-1 1.400-2 1.500-3.200C6.900 20.400 5 17.800 5 14.800 5 9.800 9.700 6 16 6z" fill="url(#mg2)"/></svg>
<!-- Mail -->
<svg class="i" style="left:167px" viewBox="0 0 32 32"><defs><linearGradient id="ml1" x1="0" y1="0" x2="0" y2="1"><stop offset="0" stop-color="#2a7bf2"/><stop offset="1" stop-color="#36b8fa"/></linearGradient></defs><rect x=".5" y=".5" width="31" height="31" rx="7" fill="url(#ml1)"/><rect x="5" y="9" width="22" height="14.500" rx="2" fill="#f3f3f5"/><path d="M5.500 10l10.500 8.500L26.500 10" fill="none" stroke="#b8bcc6" stroke-width="1"/><path d="M5.500 23l7.500-7M26.500 23L19 16" fill="none" stroke="#cfd2da" stroke-width=".8"/></svg>
<!-- Maps -->
<svg class="i" style="left:207px" viewBox="0 0 32 32"><defs><clipPath id="mpc"><rect x=".5" y=".5" width="31" height="31" rx="7"/></clipPath></defs><g clip-path="url(#mpc)"><rect width="32" height="32" fill="#eef0ea"/><path d="M0 0h9v14l-9 6z" fill="#6bd46a"/><path d="M20 0h12v18l-6-3z" fill="#58cf62"/><circle cx="26" cy="2" r="6" fill="none" stroke="#cfd6d2" stroke-width="3"/><path d="M0 16l5-2v18H0z" fill="#e58ec4"/><path d="M19 24l6-4 7 9v3H19z" fill="#fdc420"/><path d="M20 17l12 11v-8l-9-6z" fill="#f6f6f2"/><rect x="8.500" y="0" width="5.500" height="32" fill="#3f8df5"/><rect x="8.500" y="0" width="5.500" height="32" fill="none" stroke="#dfe6f0" stroke-width="1.200"/><circle cx="11.500" cy="20" r="6.300" fill="#2e86f2" stroke="#fff" stroke-width="1.300"/><path d="M11.500 15.500l3.300 7.800-3.300-1.800-3.300 1.800z" fill="#fff"/></g></svg>
<!-- Photos -->
<svg class="i" style="left:247px" viewBox="0 0 32 32"><rect x=".5" y=".5" width="31" height="31" rx="7" fill="#fbfbfb"/><g opacity=".88"><ellipse cx="16" cy="8.800" rx="3.600" ry="5.800" fill="#fb9a17"/><ellipse cx="16" cy="8.800" rx="3.600" ry="5.800" fill="#f5d22c" transform="rotate(45 16 16)"/><ellipse cx="16" cy="8.800" rx="3.600" ry="5.800" fill="#8fcf4e" transform="rotate(90 16 16)"/><ellipse cx="16" cy="8.800" rx="3.600" ry="5.800" fill="#48b86a" transform="rotate(135 16 16)"/><ellipse cx="16" cy="8.800" rx="3.600" ry="5.800" fill="#4f9ff0" transform="rotate(180 16 16)"/><ellipse cx="16" cy="8.800" rx="3.600" ry="5.800" fill="#8f78d8" transform="rotate(225 16 16)"/><ellipse cx="16" cy="8.800" rx="3.600" ry="5.800" fill="#d678c0" transform="rotate(270 16 16)"/><ellipse cx="16" cy="8.800" rx="3.600" ry="5.800" fill="#f25a4a" transform="rotate(315 16 16)"/></g></svg>
<!-- FaceTime -->
<svg class="i" style="left:287px" viewBox="0 0 32 32"><rect x=".5" y=".5" width="31" height="31" rx="7" fill="url(#mg1)"/><rect x="5" y="10" width="15" height="12" rx="3" fill="#f0f4f0"/><path d="M21.500 15l5.500-4v10l-5.500-4z" fill="#f0f4f0"/></svg>
<!-- Calendar -->
<svg class="i" style="left:327px" viewBox="0 0 32 32"><defs><clipPath id="clc"><rect x=".5" y=".5" width="31" height="31" rx="7"/></clipPath></defs><g clip-path="url(#clc)"><rect width="32" height="32" fill="#fbfbfb"/><rect width="32" height="9.500" fill="#f2453d"/></g><text x="16" y="7.800" text-anchor="middle" font-family="Liberation Sans,sans-serif" font-weight="bold" font-size="6.200" fill="#fff">SEP</text><text x="16" y="26.500" text-anchor="middle" font-family="Liberation Sans,sans-serif" font-size="18" fill="#222">6</text></svg>
<!-- Contacts -->
<svg class="i" style="left:367px" viewBox="0 0 32 32"><rect x="28" y="6" width="3.500" height="5" fill="#9a9a9a"/><rect x="28" y="11" width="3.500" height="5" fill="#3f8df5"/><rect x="28" y="16" width="3.500" height="5" fill="#f59a23"/><rect x="28" y="21" width="3.500" height="5" fill="#4fc25a"/><rect x=".5" y=".5" width="29.500" height="31" rx="7" fill="#b08a4e"/><circle cx="15.500" cy="17" r="9" fill="none" stroke="#9a7640" stroke-width="1"/><circle cx="15.500" cy="14" r="3.800" fill="#96703a"/><path d="M8.500 23c1.500-4 12.500-4 14 0-2 2.500-12 2.500-14 0z" fill="#96703a"/></svg>
<!-- Reminders -->
<svg class="i" style="left:407px" viewBox="0 0 32 32"><rect x=".5" y=".5" width="31" height="31" rx="7" fill="#fbfbfb"/><circle cx="6.800" cy="8.300" r="2.300" fill="#2a86f4"/><circle cx="6.800" cy="16" r="2.300" fill="#f2453d"/><circle cx="6.800" cy="23.700" r="2.300" fill="#fd9a14"/><path d="M12 8.300h15M12 16h15M12 23.700h15" stroke="#d6d6d8" stroke-width="1"/></svg>
<!-- Notes -->
<svg class="i" style="left:447px" viewBox="0 0 32 32"><defs><clipPath id="ntc"><rect x=".5" y=".5" width="31" height="31" rx="7"/></clipPath></defs><g clip-path="url(#ntc)"><rect width="32" height="32" fill="#f6f5f2"/><rect width="32" height="8.500" fill="#fdd32e"/><path d="M0 8.500h32" stroke="#e0b81a" stroke-width=".6"/><path d="M0 14.500h32M0 20h32M0 25.500h32" stroke="#dcdad6" stroke-width=".7"/></g></svg>
<!-- Freeform -->
<svg class="i" style="left:487px" viewBox="0 0 32 32"><rect x=".5" y=".5" width="31" height="31" rx="7" fill="#fbfbfb"/><circle cx="12" cy="20" r="8.500" fill="#f5455c"/><path d="M4 16a8.500 8.500 0 0 1 8-4.500v6z" fill="#fdb324"/><rect x="11" y="4.500" width="16.500" height="16.500" rx="1.500" fill="#38b4f6"/><path d="M11 12.500v8.500h8.500a8.500 8.500 0 0 0-8.500-8.500z" fill="#6a98e8"/><path d="M5.500 19.500c3-9 5-9 4.500-2s3-7 4.500-4 0 6 2 2 2.500-3.500 3 0 3-1 6-4" fill="none" stroke="#1c2a4a" stroke-width="1.500" stroke-linecap="round"/></svg>
<!-- TV -->
<svg class="i" style="left:527px" viewBox="0 0 32 32"><rect x=".5" y=".5" width="31" height="31" rx="7" fill="#1d1d1f"/><g transform="translate(3.500 8.200) scale(.78)"><path d="M10.800 9.200c0-1.500 1.200-2.200 1.300-2.300-.7-1-1.800-1.200-2.200-1.200-.9-.1-1.800.5-2.300.5s-1.200-.5-2-.5c-1 0-2 .6-2.500 1.500-1.100 1.800-.3 4.600.7 6.100.5.700 1.100 1.600 1.900 1.500.8 0 1.100-.5 2-.5s1.200.5 2 .5 1.400-.7 1.900-1.500c.6-.8.800-1.700.8-1.700s-1.600-.6-1.600-2.400zM9.300 4.700c.4-.5.700-1.200.6-1.900-.6 0-1.300.4-1.800.9-.4.500-.7 1.200-.6 1.800.7.100 1.400-.3 1.800-.8z" fill="#f5f5f7"/></g><text x="21.200" y="20.600" text-anchor="middle" font-family="Liberation Sans,sans-serif" font-size="12" fill="#f5f5f7">tv</text></svg>
<!-- Music -->
<svg class="i" style="left:567px" viewBox="0 0 32 32"><defs><linearGradient id="mu1" x1="0" y1="0" x2="0" y2="1"><stop offset="0" stop-color="#fb5c6c"/><stop offset="1" stop-color="#f8324a"/></linearGradient></defs><rect x=".5" y=".5" width="31" height="31" rx="7" fill="url(#mu1)"/><path d="M12.500 8.500l10.500-2.500v14.200a2.900 2.400 0 1 1-1.500-2.100V10.300l-7.500 1.800v10.100a2.900 2.400 0 1 1-1.500-2.100z" fill="#fff"/></svg>
<!-- App Store -->
<svg class="i" style="left:607px" viewBox="0 0 32 32"><defs><linearGradient id="as1" x1="0" y1="0" x2="0" y2="1"><stop offset="0" stop-color="#2aa8f8"/><stop offset="1" stop-color="#2a6ef0"/></linearGradient></defs><rect x=".5" y=".5" width="31" height="31" rx="7" fill="url(#as1)"/><g stroke="#fff" stroke-width="2.200" stroke-linecap="round" fill="none"><path d="M17.800 7l-9 16.500M14.200 7l9.300 16.500M6 19.800h20"/></g></svg>
<!-- Settings -->
<svg class="i" style="left:647px" viewBox="0 0 32 32"><defs><linearGradient id="st1" x1="0" y1="0" x2="0" y2="1"><stop offset="0" stop-color="#c4c8cc"/><stop offset="1" stop-color="#8c8e92"/></linearGradient></defs><rect x=".5" y=".5" width="31" height="31" rx="7" fill="url(#st1)"/><circle cx="16" cy="16" r="12.300" fill="#55575b"/><circle cx="16" cy="16" r="10.200" fill="none" stroke="#9a9ca0" stroke-width="2.200" stroke-dasharray="1.500 1.170"/><circle cx="16" cy="16" r="8.300" fill="#6e7074" stroke="#3c3d40" stroke-width="1.200"/><path d="M16 16L11.800 8.800M16 16h8.300M16 16l-4.200 7.200" stroke="#3c3d40" stroke-width="1.500"/><circle cx="16" cy="16" r="2.300" fill="#3c3d40"/></svg>
<!-- AnyDesk 1 -->
<svg class="i" style="left:687px" viewBox="0 0 32 32"><rect x=".5" y=".5" width="31" height="31" rx="7" fill="#ef443b"/><path d="M13 7.800L21.200 16 13 24.200 4.800 16z" fill="#fff"/><path d="M18.800 9.500l1.800-1.800L29 16l-8.400 8.300-1.800-1.800L25.300 16z" fill="#fff"/></svg>
<!-- AnyDesk 2 -->
<svg class="i" style="left:727px" viewBox="0 0 32 32"><rect x=".5" y=".5" width="31" height="31" rx="7" fill="#ef443b"/><path d="M13 7.800L21.200 16 13 24.200 4.800 16z" fill="#fff"/><path d="M18.800 9.500l1.800-1.800L29 16l-8.400 8.300-1.800-1.800L25.300 16z" fill="#fff"/><defs><clipPath id="bdc"><circle cx="25.200" cy="25.200" r="9.200"/></clipPath></defs><g clip-path="url(#bdc)"><circle cx="25.200" cy="25.200" r="9.200" fill="#0d0809"/><path d="M19.500 24c1-4.500 4.500-6.500 8-5.500 3.500 1 4.500 5 5 8.500l.5 4-4-1.500-2.500 1.500-2.500-2-3 2c1-2 1.500-3.500 1.300-5z" fill="#efeae8"/><path d="M17.800 23.500c.5-1.500 1.800-2.300 3.300-2l2 1.200-1.200 1.500-2.300 1-.7 2c-.9-1-1.400-2.300-1.100-3.700z" fill="#f5b22a"/><path d="M19 33l3-3 2 1.500 3-2 2.500 1.500 3 1v3H19z" fill="#5a3018"/></g></svg>
<!-- System Information -->
<svg class="i" style="left:767px" viewBox="0 0 32 32"><rect x=".5" y=".5" width="31" height="31" rx="7" fill="#fbfbfb"/><circle cx="16" cy="1" r="2.600" fill="none" stroke="#9aa0a6" stroke-width="1.200"/><path d="M15 3.500l-6 9c-4 5-5 10-2.500 15M17 3.500l6 9c4 5 5 10 2.500 15" fill="none" stroke="#a6acb2" stroke-width="1.800" stroke-linecap="round"/><path d="M12 9h16M26 7.500v3M22 8v2" stroke="#9aa0a6" stroke-width=".9"/><rect x="9" y="20" width="14" height="6.500" rx=".8" fill="#2a2c2e"/><path d="M10.500 26.500v4M13.200 26.500v4M16 26.500v4M18.800 26.500v4M21.500 26.500v4" stroke="#8a8e92" stroke-width="1.300"/><path d="M10.500 22h11" stroke="#6a6e72" stroke-width=".8"/></svg>
<i style="position:absolute;left:812px;top:7px;width:1px;height:35px;background:rgba(60,10,40,.55)"></i>
<!-- Document -->
<svg class="i" style="left:824px" viewBox="0 0 32 32"><path d="M4.500 1h14l9 9v22h-23z" fill="#fdfdfd"/><path d="M18.500 1l9 9h-7c-1.200 0-2-.8-2-2z" fill="#d9d9db"/><rect x="9.500" y="12.500" width="13.500" height="15" rx="1.200" fill="#8a9096"/><rect x="10.300" y="13.300" width="12" height="11.500" rx=".8" fill="#b4babe"/><rect x="12" y="14" width="8" height="1.800" fill="#3a3d40"/><rect x="10.300" y="25.500" width="12" height="1.500" fill="#4a4d50"/></svg>
<!-- Trash -->
<svg class="i" style="left:864px" viewBox="0 0 32 32"><defs><linearGradient id="tr1" x1="0" y1="0" x2="1" y2="0"><stop offset="0" stop-color="#dcdcde"/><stop offset=".5" stop-color="#f6f6f8"/><stop offset="1" stop-color="#d2d2d6"/></linearGradient></defs><path d="M3 3.500c0-1.200 5.800-2.200 13-2.200s13 1 13 2.200L26.500 30c-.2 1.400-4.800 2.300-10.500 2.300S5.700 31.400 5.500 30z" fill="url(#tr1)" opacity=".94"/><ellipse cx="16" cy="3.500" rx="13" ry="2.200" fill="#eeeef0" stroke="#cfcfd3" stroke-width=".6"/></svg>
<b style="left:21px"></b><b style="left:661px"></b><b style="left:701px"></b><b style="left:741px"></b><b style="left:781px"></b>
</div>
</body>
</html>
